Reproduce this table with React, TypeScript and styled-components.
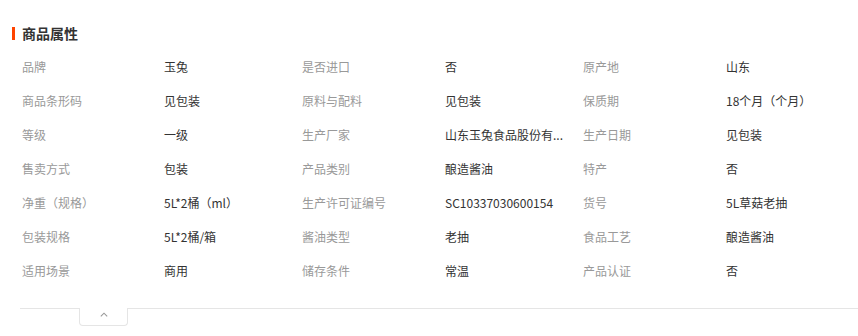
import { createGlobalStyle, styled } from 'styled-components'

const Global = createGlobalStyle`
  body {
    margin: 0;
    background: #fff;
    font-family: "Noto Sans CJK SC", "Noto Sans", "Liberation Sans", sans-serif;
  }
`

const Panel = styled.section`
  padding: 26px 0 0 12px;
`

const Title = styled.h3`
  display: flex;
  align-items: center;
  gap: 7px;
  margin: 0;
  height: 15px;
  font-size: 14px;
  line-height: 15px;
  font-weight: 700;
  color: #333;
`

const Bar = styled.span`
  width: 3px;
  height: 13px;
  background: #ff4400;
`

const Grid = styled.dl`
  display: grid;
  grid-template-columns: 142px 138px 143px 138px 143px 1fr;
  grid-auto-rows: 34px;
  margin: 9px 0 0 10px;
  font-size: 12px;
  line-height: 34px;
`

const Label = styled.dt`
  margin: 0;
  color: #999;
`

const Value = styled.dd`
  margin: 0;
  color: #333;
  white-space: nowrap;
`

const Foot = styled.div`
  margin: 20px 0 0 8px;
  border-top: 1px solid #e5e5e5;
`

const Toggle = styled.button`
  display: flex;
  align-items: flex-start;
  justify-content: center;
  margin: -1px 0 0 59px;
  padding: 4px 0 0;
  width: 49px;
  height: 18px;
  background: #fff;
  border: 1px solid #e5e5e5;
  border-top: none;
  border-radius: 0 0 4px 4px;
  cursor: pointer;
`

const rows: [string, string][] = [
  ['品牌', '玉兔'],
  ['是否进口', '否'],
  ['原产地', '山东'],
  ['商品条形码', '见包装'],
  ['原料与配料', '见包装'],
  ['保质期', '18个月（个月）'],
  ['等级', '一级'],
  ['生产厂家', '山东玉兔食品股份有限公司'],
  ['生产日期', '见包装'],
  ['售卖方式', '包装'],
  ['产品类别', '酿造酱油'],
  ['特产', '否'],
  ['净重（规格）', '5L*2桶（ml）'],
  ['生产许可证编号', 'SC10337030600154'],
  ['货号', '5L草菇老抽'],
  ['包装规格', '5L*2桶/箱'],
  ['酱油类型', '老抽'],
  ['食品工艺', '酿造酱油'],
  ['适用场景', '商用'],
  ['储存条件', '常温'],
  ['产品认证', '否'],
]

// long Chinese values get cut to 9 chars, like the shop page does
const clip = (s: string) => (/^[\u4e00-\u9fa5]{10,}$/.test(s) ? s.slice(0, 9) + '...' : s)

export default function App() {
  return (
    <Panel>
      <Global />
      <Title>
        <Bar />
        商品属性
      </Title>
      <Grid>
        {rows.map(([k, v]) => [
          <Label key={k}>{k}</Label>,
          <Value key={k + '-v'} title={v}>
            {clip(v)}
          </Value>,
        ])}
      </Grid>
      <Foot>
        <Toggle aria-label="收起">
          <svg width="8" height="5" viewBox="0 0 8 5">
            <path d="M0.8 4.4 L4 1.2 L7.2 4.4" fill="none" stroke="#999" strokeWidth="1.1" />
          </svg>
        </Toggle>
      </Foot>
    </Panel>
  )
}
